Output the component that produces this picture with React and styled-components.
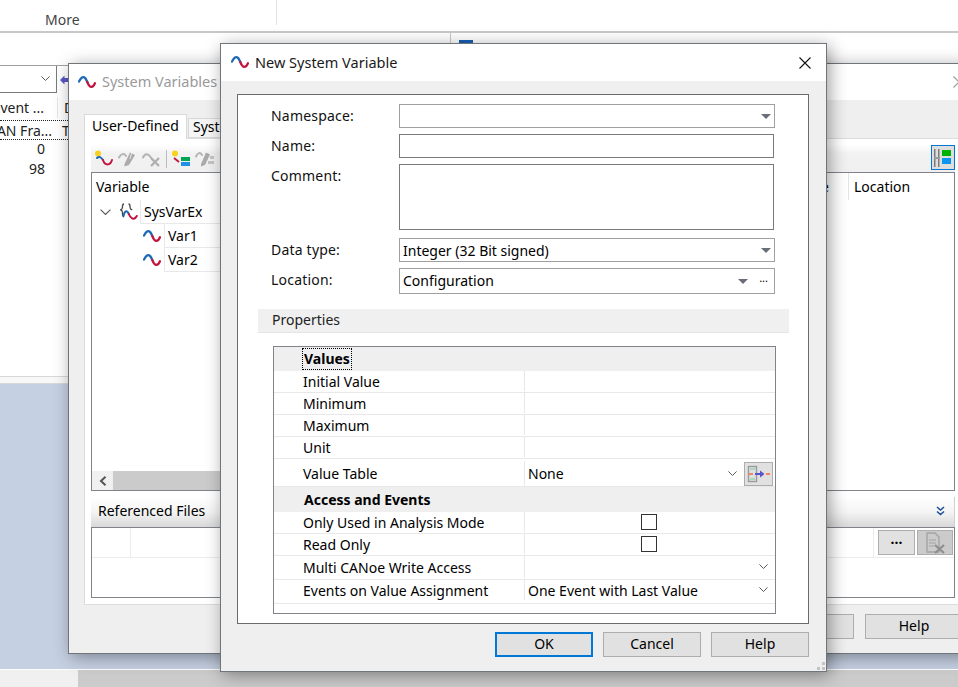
import React from 'react';
import styled, { createGlobalStyle } from 'styled-components';

const GlobalStyle = createGlobalStyle`
  html, body {
    margin: 0;
    padding: 0;
    width: 100%;
    height: 100%;
    overflow: hidden;
    background: #c5d0e2;
  }
  * {
    box-sizing: border-box;
  }
  body {
    font-family: "Noto Sans", "Liberation Sans", sans-serif;
    font-size: 14px;
    color: #000;
  }
`;

const Page = styled.div`
  position: relative;
  width: 958px;
  height: 687px;
  overflow: hidden;
  display: grid;
  grid-template-rows: 33px 1fr 18px;
`;

const Ribbon = styled.div`
  background: #fff;
  border-bottom: 2px solid #c8c8c8;
  display: flex;
  align-items: flex-start;
`;

const RibbonGroup = styled.div`
  width: 277px;
  height: 25px;
  padding: 10px 0 0 45px;
  border-right: 1px solid #e2e2e2;
  color: #444;
  line-height: 20px;
`;

const Workspace = styled.div`
  background: #c5d0e2;
`;

const PanelRow = styled.div`
  height: 351px;
  background: #fff;
  display: flex;
`;

const LeftPanel = styled.div`
  width: 451px;
  display: flex;
  flex-direction: column;
  border-right: 1px solid #c8c8c8;
`;

const RightPanel = styled.div`
  flex: 1;
  padding: 7px 0 0 8px;
`;

const BlueTab = styled.div`
  width: 14px;
  height: 6px;
  background: #1a5fb4;
`;

const PanelToolbar = styled.div`
  height: 33px;
  border-bottom: 1px solid #a0a0a0;
`;

const ComboRow = styled.div`
  display: flex;
  align-items: center;
  gap: 3px;
  height: 27px;
`;

const Combo = styled.div`
  width: 57px;
  height: 27px;
  border: 1px solid #7a7a7a;
  border-left: none;
  border-top: none;
  display: flex;
  align-items: center;
  justify-content: flex-end;
  padding-right: 6px;
`;

const TraceHead = styled.div`
  display: flex;
  height: 24px;
  margin-top: 4px;
  padding-bottom: 2px;
  border-bottom: 1px dotted #222;
`;

const TraceRow = styled.div`
  display: flex;
  height: ${(p) => p.$h || 20}px;
  padding-bottom: ${(p) => (p.$dotted ? 0 : 4)}px;
  border-bottom: ${(p) => (p.$dotted ? '1px dotted #222' : 'none')};
`;

const TraceCell = styled.div`
  width: 58px;
  flex: none;
  display: flex;
  justify-content: flex-end;
  align-items: center;
  overflow: hidden;
  white-space: nowrap;
  padding-right: ${(p) => p.$pad}px;
  color: #222;
  border-right: ${(p) => (p.$line ? '1px solid #e6e6e6' : 'none')};
`;

const TraceNext = styled.div`
  padding-left: ${(p) => p.$pad}px;
  display: flex;
  align-items: center;
  color: #222;
`;

const PanelFooter = styled.div`
  margin-top: auto;
  height: 8px;
  background: #f8f8f8;
  border-top: 1px solid #d8d8d8;
  border-bottom: 1px solid #d8d8d8;
`;

const BottomBar = styled.div`
  border-top: 1px solid #fff;
  background: #cbcbcb;
`;

const BottomThumb = styled.div`
  width: 78px;
  height: 100%;
  background: #f0f0f0;
`;

const Win = styled.div`
  position: absolute;
  background: #efefef;
  border: 1px solid #70757a;
  box-shadow: 3px 3px 16px rgba(0, 0, 0, 0.38);
  display: flex;
  flex-direction: column;
  left: ${(p) => p.$x}px;
  top: ${(p) => p.$y}px;
  width: ${(p) => p.$w}px;
  height: ${(p) => p.$h}px;
`;

const TitleBar = styled.div`
  height: ${(p) => p.$h}px;
  flex: none;
  background: #fff;
  display: flex;
  align-items: center;
  gap: 6px;
  padding: ${(p) => (p.$inactive ? '0 5px 0 9px' : '0 15px 0 10px')};
  font-size: 14.5px;
  color: ${(p) => (p.$inactive ? '#9a9a9a' : '#1a1a1a')};
`;

const TitleText = styled.span`
  padding-bottom: 2px;
`;

const TitleClose = styled.button`
  margin-left: auto;
  border: none;
  background: none;
  padding: 0;
  width: 12px;
  height: 12px;
  display: flex;
`;

const TabStrip = styled.div`
  display: flex;
  align-items: flex-end;
  padding: 14px 0 0 15px;
  height: 38px;
  flex: none;
`;

const Tab = styled.div`
  width: ${(p) => p.$w}px;
  height: ${(p) => (p.$active ? 25 : 20)}px;
  margin-right: 1px;
  margin-bottom: ${(p) => (p.$active ? -1 : 0)}px;
  position: relative;
  background: ${(p) => (p.$active ? '#fff' : '#f5f5f5')};
  border: 1px solid #d9d9d9;
  border-bottom: ${(p) => (p.$active ? 'none' : '1px solid #d9d9d9')};
  padding-left: ${(p) => (p.$active ? 7 : 4)}px;
  line-height: ${(p) => (p.$active ? 22 : 16)}px;
  white-space: nowrap;
`;

const TabPanel = styled.div`
  margin-left: 15px;
  width: 878px;
  height: 467px;
  background: #fff;
  border: 1px solid #dcdcdc;
  padding: 6px;
  display: flex;
  flex-direction: column;
`;

const VarToolbar = styled.div`
  height: 27px;
  flex: none;
  background: linear-gradient(#fff 0, #f2f2f2 30%, #f0f0f0 100%);
  display: flex;
  align-items: center;
  padding: 0 2px 0 3px;
  gap: 4px;
`;

const ToolSep = styled.div`
  width: 1px;
  height: 18px;
  background: #bcbcbc;
`;

const ViewButton = styled.div`
  margin-left: auto;
  margin-right: -2px;
  align-self: flex-start;
  width: 24px;
  height: 25px;
  border: 1px solid #0078d7;
  background: #dedede;
  display: flex;
  align-items: center;
  justify-content: center;
`;

const VarBox = styled.div`
  height: 319px;
  flex: none;
  border: 1px solid #80848a;
  display: flex;
  flex-direction: column;
  position: relative;
`;

const VarHead = styled.div`
  height: 27px;
  flex: none;
  display: flex;
  align-items: center;
  padding-left: 4px;
`;

const HeadSpacer = styled.div`
  flex: 1;
`;

const HeadTail = styled.div`
  padding-right: 19px;
`;

const LocationHead = styled.div`
  width: 106px;
  height: 100%;
  border-left: 1px solid #e4e4e4;
  padding-left: 5px;
  display: flex;
  align-items: center;
`;

const TreeRow = styled.div`
  height: 24px;
  flex: none;
  display: flex;
  align-items: center;
  padding-left: ${(p) => p.$indent}px;
`;

const TreeGap = styled.span`
  width: 8px;
`;

const TreeLabel = styled.div`
  align-self: stretch;
  display: flex;
  align-items: center;
  padding-left: 3px;
  width: 300px;
  border-left: 1px solid #e8e8e8;
  border-bottom: 1px solid #e8e8e8;
  margin-left: ${(p) => p.$ml}px;
`;

const HScroll = styled.div`
  position: absolute;
  left: 0;
  bottom: 0;
  width: 620px;
  height: 19px;
  background: #cbcbcb;
`;

const ScrollArrow = styled.div`
  width: 21px;
  height: 100%;
  background: #f0f0f0;
  display: flex;
  align-items: center;
  justify-content: center;
`;

const RefBand = styled.div`
  margin-top: 6px;
  height: 30px;
  flex: none;
  background: linear-gradient(#ffffff, #f4f4f4 50%, #d8d8d8);
  border-right: 1px solid #d0d0d0;
  padding: 0 9px 3px 7px;
  display: flex;
  align-items: center;
  justify-content: space-between;
`;

const RefBox = styled.div`
  flex: 1;
  border: 1px solid #80848a;
`;

const RefRow = styled.div`
  height: 30px;
  border-bottom: 1px solid #ececec;
  display: flex;
`;

const RefCell = styled.div`
  width: ${(p) => p.$w}px;
  flex: ${(p) => (p.$grow ? 1 : 'none')};
  border-right: ${(p) => (p.$line ? '1px solid #ececec' : 'none')};
`;

const RefActions = styled.div`
  display: flex;
  gap: 2px;
  padding: 2px 0 0 4px;
`;

const SmallButton = styled.div`
  width: ${(p) => p.$w}px;
  height: 25px;
  background: ${(p) => (p.$off ? '#cbcbcb' : '#e1e1e1')};
  border: 1px solid #adadad;
  display: flex;
  align-items: center;
  justify-content: center;
`;

const Footer = styled.div`
  display: flex;
  justify-content: flex-end;
  gap: ${(p) => p.$gap}px;
  margin: ${(p) => p.$m};
`;

const DlgButton = styled.button`
  width: 98px;
  height: 25px;
  margin: 0;
  padding: 0 0 2px;
  background: #e1e1e1;
  border: ${(p) => (p.$focus ? '2px solid #0078d7' : '1px solid #adadad')};
  font: inherit;
  color: #000;
`;

const InnerBox = styled.div`
  margin: 13px 17px 0 16px;
  height: 530px;
  flex: none;
  background: #fff;
  border: 1px solid #6a6a6a;
  padding-top: 9px;
  display: flex;
  flex-direction: column;
`;

const Form = styled.div`
  display: grid;
  grid-template-columns: 128px 376px;
  row-gap: 6px;
  padding-left: 33px;
`;

const Label = styled.div`
  line-height: 22px;
  letter-spacing: 0.2px;
  color: #111;
  padding-top: 1px;
  margin-top: ${(p) => p.$mt || 0}px;
`;

const Field = styled.div`
  height: ${(p) => p.$h}px;
  width: ${(p) => (p.$narrow ? 375 : 376)}px;
  margin-top: ${(p) => p.$mt || 0}px;
  background: #fff;
  border: ${(p) => (p.$dark ? '1px solid #7a7a7a' : '1px solid #a0a0a0')};
  display: flex;
  align-items: center;
  padding: 0 3px;
`;

const FieldValue = styled.span`
  flex: 1;
  padding-bottom: ${(p) => p.$up || 0}px;
`;

const Triangle = styled.span`
  width: 0;
  height: 0;
  border-left: 5px solid transparent;
  border-right: 5px solid transparent;
  border-top: 5px solid #6a6e78;
`;

const Ellipsis = styled.span`
  margin: 0 3px 6px 11px;
  font-size: 11px;
  line-height: 10px;
`;

const PropsBand = styled.div`
  margin: 15px 19px 0 20px;
  height: 24px;
  flex: none;
  background: #f0f0f0;
  border-bottom: 1px solid #e4e4e4;
  padding-left: 14px;
  line-height: 22px;
  color: #222;
`;

const PropGrid = styled.div`
  margin: 13px 32px 9px 35px;
  flex: 1;
  border: 1px solid #80848a;
  display: flex;
  flex-direction: column;
`;

const GroupRow = styled.div`
  height: ${(p) => p.$h}px;
  flex: none;
  background: #efefef;
  padding: 0 0 ${(p) => p.$up || 0}px 30px;
  display: flex;
  align-items: center;
  font-weight: 700;
`;

const FocusText = styled.span`
  outline: 1px dotted #000;
  padding: 0 1px;
  line-height: 20px;
  margin-left: -1px;
`;

const PropRow = styled.div`
  height: ${(p) => p.$h}px;
  flex: none;
  display: grid;
  grid-template-columns: 251px 1fr;
  border-bottom: 1px solid #e8e8e8;
  padding-top: ${(p) => p.$down || 0}px;
  padding-bottom: ${(p) => p.$up || 0}px;
`;

const PropName = styled.div`
  padding-left: 29px;
  display: flex;
  align-items: center;
  box-shadow: 1px 0 0 #e8e8e8;
  margin-right: 1px;
`;

const PropValue = styled.div`
  padding-left: 3px;
  display: flex;
  align-items: center;
  justify-content: ${(p) => (p.$center ? 'center' : 'flex-start')};
  padding-right: ${(p) => p.$pr || 0}px;
`;

const ValueText = styled.span`
  flex: 1;
`;

const Check = styled.span`
  width: 16px;
  height: 16px;
  background: #fff;
  border: 1px solid #333;
`;

const TableButton = styled.div`
  width: 29px;
  height: 24px;
  margin-left: 7px;
  background: #e1e1e1;
  border: 1px solid #adadad;
  display: flex;
  align-items: center;
  justify-content: center;
`;

const Grip = styled.svg`
  position: absolute;
  right: 1px;
  bottom: 1px;
`;

const Wave = ({ size = 18 }) => (
  <svg width={size} height={size * 0.78} viewBox="0 0 18 14" fill="none">
    <path d="M1 6.5C3 2.5 5 1 7 2.8C8 3.8 8.6 5.4 9.3 7" stroke="#1c6ab5" strokeWidth="2.3" strokeLinecap="round" />
    <path d="M9.3 7C10 8.8 11 11.4 13 11.8C14.5 12 16 10.7 17 8.2" stroke="#c2143f" strokeWidth="2.3" strokeLinecap="round" />
  </svg>
);

const Chevron = ({ w = 9, color = '#444' }) => (
  <svg width={w} height={w * 0.6} viewBox="0 0 10 6" fill="none">
    <path d="M0.5 0.5L5 5L9.5 0.5" stroke={color} strokeWidth="1" />
  </svg>
);

const CloseIcon = ({ color = '#111' }) => (
  <svg width="12" height="12" viewBox="0 0 12 12" fill="none">
    <path d="M0.5 0.5L11.5 11.5M11.5 0.5L0.5 11.5" stroke={color} strokeWidth="1.1" />
  </svg>
);

const NamespaceIcon = () => (
  <svg width="19" height="19" viewBox="0 0 19 19" fill="none">
    <path d="M5 1C3 1 3.6 3 3.4 4.6C3.2 6 2.6 6.6 1.2 6.8C2.6 7 3.2 7.6 3.4 9C3.6 10.6 3 13.5 5 14" stroke="#4a4a4a" strokeWidth="1.3" />
    <path d="M9.5 1C11.5 1 10.9 3 11.1 4.6C11.3 6 11.9 6.6 13.3 6.8" stroke="#4a4a4a" strokeWidth="1.3" />
    <path d="M4.5 13C5.5 8 8 6.5 9.8 11" stroke="#1c6ab5" strokeWidth="2" strokeLinecap="round" />
    <path d="M9.8 11C11 14.5 15 18.5 17.8 13" stroke="#c2143f" strokeWidth="2" strokeLinecap="round" />
  </svg>
);

const AddVarIcon = () => (
  <svg width="20" height="18" viewBox="0 0 20 18" fill="none">
    <circle cx="4" cy="3.5" r="3" fill="#f7d11e" />
    <path d="M3 8C5 6 7 7 9 10" stroke="#1c6ab5" strokeWidth="2" strokeLinecap="round" />
    <path d="M9 10C11 16 16 16 18 10" stroke="#c2143f" strokeWidth="2" strokeLinecap="round" />
  </svg>
);

const EditVarIcon = () => (
  <svg width="20" height="18" viewBox="0 0 20 18" fill="none">
    <path d="M1 7.5C3 3.5 6 3 8 6" stroke="#b4b4b4" strokeWidth="2" strokeLinecap="round" />
    <path d="M6.5 14L12 2.5L17 5L11 15L6.5 16.5Z" fill="#ababab" />
    <path d="M13.5 3L12 9" stroke="#e8e8e8" strokeWidth="1" />
  </svg>
);

const DeleteVarIcon = () => (
  <svg width="20" height="18" viewBox="0 0 20 18" fill="none">
    <path d="M1 7.5C3 3 6 3 9 7.5" stroke="#b4b4b4" strokeWidth="2" strokeLinecap="round" />
    <path d="M9 8L17 16M17 8L9 16" stroke="#b0b0b0" strokeWidth="2.4" />
  </svg>
);

const AddStructIcon = () => (
  <svg width="20" height="18" viewBox="0 0 20 18" fill="none">
    <circle cx="4" cy="3.5" r="3" fill="#f7d11e" />
    <path d="M3 8L8 12" stroke="#c2143f" strokeWidth="1.8" />
    <rect x="10" y="7" width="9" height="4" fill="#00a651" />
    <rect x="10" y="12" width="9" height="4" fill="#1e90e6" />
  </svg>
);

const EditStructIcon = () => (
  <svg width="20" height="18" viewBox="0 0 20 18" fill="none">
    <path d="M1 6.5C3 2.5 5 2 7 5" stroke="#b4b4b4" strokeWidth="2" strokeLinecap="round" />
    <path d="M6 14L11 2.5L15 4.5L10 15L6 16.5Z" fill="#ababab" />
    <rect x="15" y="6" width="4" height="3" fill="#c4c4c4" />
    <rect x="13" y="11" width="6" height="3" fill="#c4c4c4" />
  </svg>
);

const ViewIcon = () => (
  <svg width="18" height="20" viewBox="0 0 18 20" fill="none">
    <rect x="0" y="1" width="1.5" height="18" fill="#7c7c7c" />
    <rect x="4" y="1" width="1.5" height="18" fill="#7c7c7c" />
    <rect x="0" y="9" width="6" height="2" fill="#9a9a9a" />
    <rect x="8" y="2" width="9" height="6" fill="#00b200" />
    <rect x="8" y="10" width="9" height="6" fill="#0a96f0" />
  </svg>
);

const ValueTableIcon = () => (
  <svg width="24" height="18" viewBox="0 0 24 18" fill="none">
    <rect x="1.5" y="1.5" width="8" height="15" stroke="#9a9a9a" strokeWidth="1.4" />
    <rect x="3" y="3" width="5" height="2" fill="#a8d8c0" />
    <rect x="3" y="13" width="5" height="2" fill="#a8d8c0" />
    <rect x="2" y="8" width="4" height="2" fill="#f4865a" />
    <rect x="19" y="8" width="4" height="2" fill="#f4865a" />
    <path d="M8 8H13V5.5L17.5 9L13 12.5V10H8Z" fill="#5a55c8" />
  </svg>
);

const DoubleDown = () => (
  <svg width="9" height="10" viewBox="0 0 9 10" fill="none">
    <path d="M1 1L4.5 4L8 1M1 5.5L4.5 8.5L8 5.5" stroke="#1f4f96" strokeWidth="1.6" />
  </svg>
);

const DeleteFileIcon = () => (
  <svg width="24" height="22" viewBox="0 0 24 22" fill="none">
    <path d="M4 1H12L16 5V20H4Z" stroke="#a4a4a4" strokeWidth="1.4" />
    <path d="M6 8H13M6 11H13M6 14H11" stroke="#a4a4a4" strokeWidth="1.2" />
    <path d="M12 13L21 21M21 13L12 21" stroke="#8e8e8e" strokeWidth="2.2" />
  </svg>
);

const ArrowLeft = () => (
  <svg width="8" height="10" viewBox="0 0 8 10" fill="none">
    <path d="M6.5 0.8L2 5L6.5 9.2" stroke="#555" strokeWidth="2" />
  </svg>
);

const PurpleArrow = () => (
  <svg width="9" height="10" viewBox="0 0 9 10">
    <path d="M0 5L4.5 0.5V3H9V7H4.5V9.5Z" fill="#5a55c8" />
  </svg>
);

const SystemVariablesWindow = () => (
  <Win $x={68} $y={63} $w={903} $h={591}>
    <TitleBar $h={36} $inactive>
      <Wave />
      <TitleText>System Variables</TitleText>
      <TitleClose>
        <CloseIcon color="#9a9a9a" />
      </TitleClose>
    </TitleBar>
    <TabStrip>
      <Tab $active $w={103}>User-Defined</Tab>
      <Tab $w={60}>System</Tab>
    </TabStrip>
    <TabPanel>
      <VarToolbar>
        <AddVarIcon />
        <EditVarIcon />
        <DeleteVarIcon />
        <ToolSep />
        <AddStructIcon />
        <EditStructIcon />
        <ViewButton>
          <ViewIcon />
        </ViewButton>
      </VarToolbar>
      <VarBox>
        <VarHead>
          Variable
          <HeadSpacer />
          <HeadTail>Value</HeadTail>
          <LocationHead>Location</LocationHead>
        </VarHead>
        <TreeRow $indent={8}>
          <Chevron w={11} color="#555" />
          <TreeGap />
          <NamespaceIcon />
          <TreeLabel $ml={2}>SysVarEx</TreeLabel>
        </TreeRow>
        <TreeRow $indent={51}>
          <Wave />
          <TreeLabel $ml={3}>Var1</TreeLabel>
        </TreeRow>
        <TreeRow $indent={51}>
          <Wave />
          <TreeLabel $ml={3}>Var2</TreeLabel>
        </TreeRow>
        <HScroll>
          <ScrollArrow>
            <ArrowLeft />
          </ScrollArrow>
        </HScroll>
      </VarBox>
      <RefBand>
        Referenced Files
        <DoubleDown />
      </RefBand>
      <RefBox>
        <RefRow>
          <RefCell $w={39} $line />
          <RefCell $grow $line />
          <RefCell $w={80}>
            <RefActions>
              <SmallButton $w={37}>
                <b>···</b>
              </SmallButton>
              <SmallButton $w={36} $off>
                <DeleteFileIcon />
              </SmallButton>
            </RefActions>
          </RefCell>
        </RefRow>
      </RefBox>
    </TabPanel>
    <Footer $gap={11} $m="9px 7px 0 0">
      <DlgButton>OK</DlgButton>
      <DlgButton>Cancel</DlgButton>
      <DlgButton>Help</DlgButton>
    </Footer>
  </Win>
);

const NewVariableDialog = () => (
  <Win $x={220} $y={43} $w={607} $h={629}>
    <TitleBar $h={37}>
      <Wave />
      <TitleText>New System Variable</TitleText>
      <TitleClose>
        <CloseIcon />
      </TitleClose>
    </TitleBar>
    <InnerBox>
      <Form>
        <Label>Namespace:</Label>
        <Field $h={24}>
          <FieldValue />
          <Triangle />
        </Field>
        <Label>Name:</Label>
        <Field $h={24} $narrow $dark />
        <Label>Comment:</Label>
        <Field $h={66} $narrow $dark />
        <Label $mt={2}>Data type:</Label>
        <Field $h={24} $mt={2}>
          <FieldValue>Integer (32 Bit signed)</FieldValue>
          <Triangle />
        </Field>
        <Label>Location:</Label>
        <Field $h={26}>
          <FieldValue $up={2}>Configuration</FieldValue>
          <Triangle />
          <Ellipsis>...</Ellipsis>
        </Field>
      </Form>
      <PropsBand>Properties</PropsBand>
      <PropGrid>
        <GroupRow $h={24}>
          <FocusText>Values</FocusText>
        </GroupRow>
        <PropRow $h={22} $up={1}>
          <PropName>Initial Value</PropName>
          <PropValue />
        </PropRow>
        <PropRow $h={22} $up={1}>
          <PropName>Minimum</PropName>
          <PropValue />
        </PropRow>
        <PropRow $h={22} $up={1}>
          <PropName>Maximum</PropName>
          <PropValue />
        </PropRow>
        <PropRow $h={22} $up={1}>
          <PropName>Unit</PropName>
          <PropValue />
        </PropRow>
        <PropRow $h={28} $down={2}>
          <PropName>Value Table</PropName>
          <PropValue $pr={2}>
            <ValueText>None</ValueText>
            <Chevron />
            <TableButton>
              <ValueTableIcon />
            </TableButton>
          </PropValue>
        </PropRow>
        <GroupRow $h={25} $up={1}>Access and Events</GroupRow>
        <PropRow $h={22} $up={1}>
          <PropName>Only Used in Analysis Mode</PropName>
          <PropValue $center $pr={6}>
            <Check />
          </PropValue>
        </PropRow>
        <PropRow $h={22} $up={1}>
          <PropName>Read Only</PropName>
          <PropValue $center $pr={6}>
            <Check />
          </PropValue>
        </PropRow>
        <PropRow $h={24} $up={1}>
          <PropName>Multi CANoe Write Access</PropName>
          <PropValue $pr={7}>
            <ValueText />
            <Chevron />
          </PropValue>
        </PropRow>
        <PropRow $h={24} $up={3}>
          <PropName>Events on Value Assignment</PropName>
          <PropValue $pr={7}>
            <ValueText>One Event with Last Value</ValueText>
            <Chevron />
          </PropValue>
        </PropRow>
      </PropGrid>
    </InnerBox>
    <Footer $gap={10} $m="8px 17px 0 0">
      <DlgButton $focus>OK</DlgButton>
      <DlgButton>Cancel</DlgButton>
      <DlgButton>Help</DlgButton>
    </Footer>
    <Grip width="8" height="8" viewBox="0 0 8 8">
      <path d="M5 0h3v3H5zM0 5h3v3H0zM5 5h3v3H5z" fill="#c4c4c4" />
    </Grip>
  </Win>
);

const App = () => (
  <Page>
    <GlobalStyle />
    <Ribbon>
      <RibbonGroup>More</RibbonGroup>
    </Ribbon>
    <Workspace>
      <PanelRow>
        <LeftPanel>
          <PanelToolbar />
          <ComboRow>
            <Combo>
              <Chevron w={9} />
            </Combo>
            <PurpleArrow />
          </ComboRow>
          <TraceHead>
            <TraceCell $pad={13} $line>Event ...</TraceCell>
            <TraceNext $pad={6}>D</TraceNext>
          </TraceHead>
          <TraceRow $h={19} $dotted>
            <TraceCell $pad={6}>CAN Fra...</TraceCell>
            <TraceNext $pad={4}>T</TraceNext>
          </TraceRow>
          <TraceRow>
            <TraceCell $pad={13}>0</TraceCell>
          </TraceRow>
          <TraceRow>
            <TraceCell $pad={13}>98</TraceCell>
          </TraceRow>
          <PanelFooter />
        </LeftPanel>
        <RightPanel>
          <BlueTab />
        </RightPanel>
      </PanelRow>
    </Workspace>
    <BottomBar>
      <BottomThumb />
    </BottomBar>
    <SystemVariablesWindow />
    <NewVariableDialog />
  </Page>
);

export default App;
